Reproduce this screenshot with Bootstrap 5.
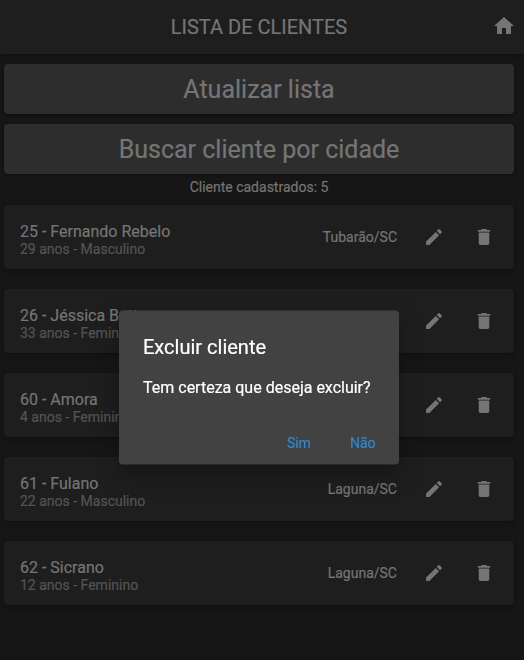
<!DOCTYPE html>
<html lang="pt-BR" data-bs-theme="dark">
<head>
<meta charset="utf-8">
<meta name="viewport" content="width=device-width, initial-scale=1">
<title>Lista de clientes</title>
<link href="https://cdn.jsdelivr.net/npm/bootstrap@5.3.0/dist/css/bootstrap.min.css" rel="stylesheet">
<style>
body{font-family:Roboto,"Liberation Sans",sans-serif;background:#161616;color:#757575;height:660px;overflow:hidden;-webkit-text-stroke:.2px currentColor}
svg{fill:currentColor;display:block;flex:none}
.app-bar{height:54px;background:#1e1e1e;box-shadow:0 1px 4px rgba(0,0,0,.4);padding:0 8px 0 26px}
.app-title{font-size:20px;line-height:24px;color:#757575}
.home-link{padding-bottom:2px}
.page{padding:10px 10px 0 4px}
.wide-buttons{gap:10px}
.btn-wide{--bs-btn-padding-y:0;height:50px;background:#2d2d2d;color:#757575;border:0;border-radius:4px;font-size:25px;padding-top:2px;box-shadow:0 1px 3px rgba(0,0,0,.4)}
.total{font-size:14px;line-height:16px;padding-top:5px;margin-bottom:10px}
.client{height:64px;background:#1e1e1e;border-radius:4px;padding:0 19px 0 16px;box-shadow:0 2px 4px rgba(0,0,0,.3)}
.client-list{gap:20px}
.client-text{padding-top:4px}
.client-name{font-size:16px;line-height:19px}
.client-info{font-size:14px;line-height:16px;color:#545454}
.city{font-size:14px;margin-right:26px}
.client .btn{--bs-btn-color:#757575}
.actions{gap:28px}
.modal-dialog{width:280px;margin:310px auto 0 119px}
.modal-content{height:154px;background:#424242;border:0;border-radius:4px;color:#fff;transform:translateY(.4px);box-shadow:0 11px 15px -7px rgba(0,0,0,.2),0 9px 24px 2px rgba(0,0,0,.22)}
.modal-title{font-size:20px;line-height:24px;font-weight:400}
.modal-header{padding:25px 24px 0}
.modal-body{padding:19px 24px 0;font-size:16px;line-height:20px}
.modal-footer{padding:0 23.5px 13px;gap:39px}
.modal-footer .btn{--bs-btn-color:#3089d0;font-size:14px;line-height:16px}
</style>
</head>
<body>
<header class="app-bar d-flex align-items-center position-relative">
  <h1 class="app-title flex-grow-1 text-center fw-normal mb-0">LISTA DE CLIENTES</h1>
  <a href="#" class="home-link text-reset" aria-label="Início"><svg width="24" height="24" viewBox="0 0 24 24"><path d="M10 20v-6h4v6h5v-8h3L12 3 2 12h3v8z"/></svg></a>
</header>
<main class="page">
  <div class="wide-buttons d-grid">
    <button class="btn btn-wide">Atualizar lista</button>
    <button class="btn btn-wide">Buscar cliente por cidade</button>
  </div>
  <p class="total text-center">Cliente cadastrados: 5</p>
  <div class="client-list d-flex flex-column" id="clients"></div>
</main>
<div class="modal d-block" tabindex="-1" role="dialog">
  <div class="modal-dialog">
    <div class="modal-content">
      <div class="modal-header border-0"><h2 class="modal-title">Excluir cliente</h2></div>
      <div class="modal-body text-nowrap">Tem certeza que deseja excluir?</div>
      <div class="modal-footer border-0">
        <button class="btn border-0 p-0 m-0">Sim</button>
        <button class="btn border-0 p-0 m-0">Não</button>
      </div>
    </div>
  </div>
</div>
<script src="https://cdn.jsdelivr.net/npm/bootstrap@5.3.0/dist/js/bootstrap.bundle.min.js"></script>
<script>
const clients = [
  ["25 - Fernando Rebelo", "29 anos - Masculino", "Tubarão/SC"],
  ["26 - Jéssica Bett", "33 anos - Feminino", "Laguna/SC"],
  ["60 - Amora", "4 anos - Feminino", "Laguna/SC"],
  ["61 - Fulano", "22 anos - Masculino", "Laguna/SC"],
  ["62 - Sicrano", "12 anos - Feminino", "Laguna/SC"]
];
document.getElementById("clients").innerHTML = clients.map(([name, info, city]) => `
  <div class="client d-flex align-items-center">
    <div class="client-text flex-grow-1"><div class="client-name">${name}</div><div class="client-info">${info}</div></div>
    <div class="city">${city}</div>
    <div class="actions d-flex">
      <button class="btn border-0 p-0" aria-label="Editar"><svg width="22" height="22" viewBox="-.5 -.5 25 25"><path d="M3 17.25V21h3.75L17.81 9.94l-3.75-3.75L3 17.25zM20.71 7.04a1 1 0 0 0 0-1.41l-2.34-2.34a1 1 0 0 0-1.41 0l-1.83 1.83 3.75 3.75 1.83-1.83z"/></svg></button>
      <button class="btn border-0 p-0" aria-label="Excluir"><svg width="22" height="22" viewBox="-.5 -.5 25 25"><path d="M6 19c0 1.100.9 2 2 2h8c1.100 0 2-.9 2-2V7H6v12zM19 4h-3.500l-1-1h-5l-1 1H5v2h14V4z"/></svg></button>
    </div>
  </div>`).join("");
</script>
</body>
</html>
